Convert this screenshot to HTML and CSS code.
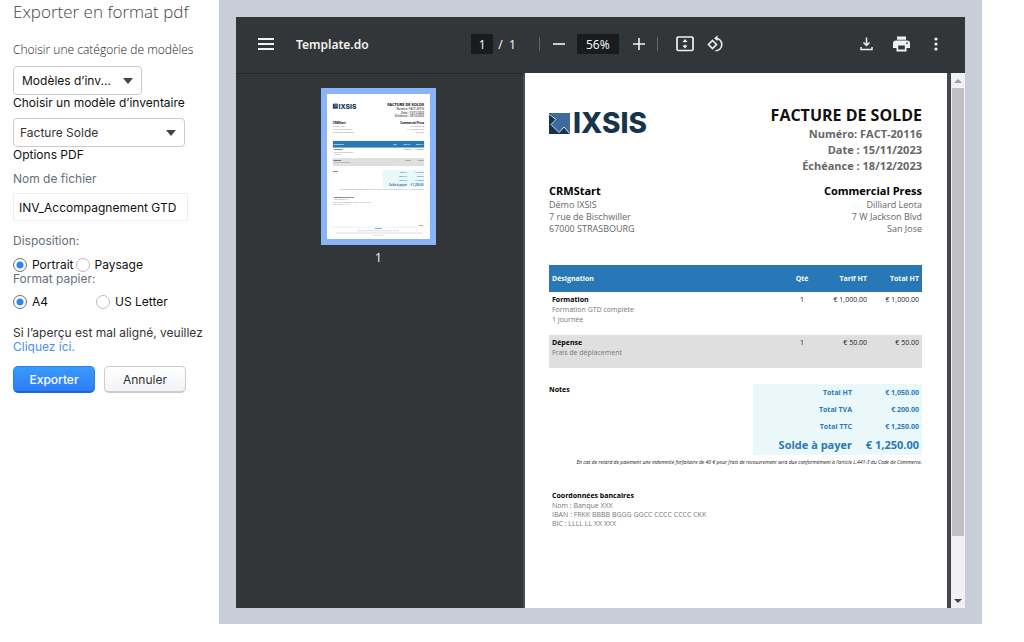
FILE: index.html
```html
<!DOCTYPE html>
<html lang="fr">
<head>
<meta charset="utf-8">
<title>Exporter en format pdf</title>
<link rel="stylesheet" href="styles.css">
</head>
<body>
<div class="layout">
  <form class="options">
    <h1 class="title">Exporter en format pdf</h1>
    <label class="label label-light" for="category">Choisir une catégorie de modèles</label>
    <div class="select select-short">
      <select id="category"><option>Modèles d’inv...</option></select>
    </div>
    <label class="label" for="template">Choisir un modèle d’inventaire</label>
    <div class="select select-long">
      <select id="template"><option>Facture Solde</option></select>
    </div>
    <h2 class="label section">Options PDF</h2>
    <label class="label label-muted" for="filename">Nom de fichier</label>
    <input class="filename" id="filename" type="text" value="INV_Accompagnement GTD">
    <fieldset class="group">
      <legend class="label label-muted">Disposition:</legend>
      <div class="radios radios-tight">
        <label class="radio"><input type="radio" name="layout" checked>Portrait</label>
        <label class="radio"><input type="radio" name="layout">Paysage</label>
      </div>
    </fieldset>
    <fieldset class="group group-next">
      <legend class="label label-muted">Format papier:</legend>
      <div class="radios radios-wide">
        <label class="radio"><input type="radio" name="paper" checked>A4</label>
        <label class="radio"><input type="radio" name="paper">US Letter</label>
      </div>
    </fieldset>
    <p class="hint">Si l’aperçu est mal aligné, veuillez <a href="#">Cliquez ici.</a></p>
    <div class="actions">
      <button class="btn btn-primary" type="button">Exporter</button>
      <button class="btn" type="button">Annuler</button>
    </div>
  </form>

  <main class="frame">
    <div class="viewer">
      <header class="toolbar">
        <div class="bar-start">
          <button class="icon" type="button" aria-label="Menu"><svg width="16" height="14" viewBox="0 0 16 14"><path d="M0 2h16M0 7h16M0 12h16" stroke="#f1f1f1" stroke-width="2"/></svg></button>
          <span class="doc-name">Template.do</span>
        </div>
        <div class="bar-middle">
          <input class="box page-box" type="text" value="1" aria-label="Page">
          <span class="page-total">/&nbsp; 1</span>
          <span class="divider"></span>
          <button class="icon" type="button" aria-label="Zoom arrière"><svg width="12" height="12" viewBox="0 0 12 12"><path d="M0 6h12" stroke="#f1f1f1" stroke-width="1.6"/></svg></button>
          <input class="box zoom-box" type="text" value="56%" aria-label="Zoom">
          <button class="icon" type="button" aria-label="Zoom avant"><svg width="12" height="12" viewBox="0 0 12 12"><path d="M0 6h12M6 0v12" stroke="#f1f1f1" stroke-width="1.6"/></svg></button>
          <span class="divider divider-second"></span>
          <button class="icon" type="button" aria-label="Ajuster à la page"><svg width="18" height="16" viewBox="0 0 18 16"><rect x="1" y="1" width="16" height="13.5" rx="1.2" fill="none" stroke="#f1f1f1" stroke-width="1.7"/><path d="M9 3l2.6 3H6.400zM9 12.500l2.600-3H6.400z" fill="#f1f1f1"/><path d="M9 5v5.500" stroke="#f1f1f1" stroke-dasharray="1.500 2"/></svg></button>
          <button class="icon rotate" type="button" aria-label="Pivoter"><svg width="18" height="18" viewBox="0 0 18 18" fill="none" stroke="#f1f1f1" stroke-width="1.600"><path d="M5.500 5.500L9.500 9.500L5.500 13.500L1.500 9.500z"/><path d="M8.500 3.200A6.300 6.300 0 1 1 8.500 15.800"/><path d="M10.500 .3L7.200 3.300L10.500 6.300z" fill="#f1f1f1" stroke="none"/></svg></button>
        </div>
        <div class="bar-end">
          <button class="icon" type="button" aria-label="Télécharger"><svg width="13" height="14" viewBox="0 0 13 14" fill="none" stroke="#f1f1f1" stroke-width="1.500"><path d="M6.500 .5v7.500M3.500 5.500l3 3 3-3M1 10v2.500h11V10"/></svg></button>
          <button class="icon" type="button" aria-label="Imprimer"><svg width="17" height="16" viewBox="0 0 17 16"><path d="M4 .5h9v3.200H4zM3 4.500h11a3 3 0 0 1 3 3V12h-3.500v3.500h-10V12H0V7.500a3 3 0 0 1 3-3z" fill="#f1f1f1"/><path d="M5.200 9.500h6.600v4H5.200z" fill="#323639"/><circle cx="14" cy="7.200" r=".9" fill="#323639"/></svg></button>
          <button class="icon more" type="button" aria-label="Plus"><svg width="4" height="14" viewBox="0 0 4 14" fill="#f1f1f1"><circle cx="2" cy="2" r="1.600"/><circle cx="2" cy="7" r="1.600"/><circle cx="2" cy="12" r="1.600"/></svg></button>
        </div>
      </header>

      <div class="content">
        <aside class="thumbs">
          <div class="thumb">
            <svg viewBox="0 0 421 594" role="img" aria-label="Aperçu de la page 1" font-family="Open Sans, sans-serif">
              <rect width="421" height="594" fill="#fff"/>
              <rect x="24" y="40" width="20" height="20" fill="#1d3f5e"/><path d="M27 40h17v17l-5-5-4 4-8-8 4-4z" fill="#466f9d"/>
              <text x="47" y="60" font-family="Inter, sans-serif" font-weight="800" font-size="28" fill="#16344c">IXSIS</text>
              <g text-anchor="end" font-weight="700"><text x="397" y="48" font-size="16">FACTURE DE SOLDE</text>
              <g font-size="11" fill="#666"><text x="397" y="65">Numéro: FACT-20116</text><text x="397" y="81">Date : 15/11/2023</text><text x="397" y="96">Échéance : 18/12/2023</text></g>
              <text x="397" y="122" font-size="11">Commercial Press</text></g>
              <text x="24" y="122" font-size="11" font-weight="700">CRMStart</text>
              <g font-size="9" fill="#777"><text x="24" y="135">Démo IXSIS</text><text x="24" y="147">7 rue de Bischwiller</text><text x="24" y="160">67000 STRASBOURG</text>
              <g text-anchor="end"><text x="397" y="135">Dilliard Leota</text><text x="397" y="147">7 W Jackson Blvd</text><text x="397" y="160">San Jose</text></g></g>
              <rect x="24" y="192" width="373" height="27" fill="#2878b8"/><rect x="24" y="262" width="373" height="33" fill="#dfdfdf"/>
              <g font-size="7" font-weight="700"><g fill="#fff"><text x="27" y="208">Désignation</text><text x="271" y="208">Qté</text><text x="312" y="208">Tarif HT</text><text x="363" y="208">Total HT</text></g>
              <text x="27" y="230">Formation</text><text x="27" y="273">Dépense</text><text x="24" y="320">Notes</text><text x="27" y="425">Coordonnées bancaires</text></g>
              <g font-size="7" fill="#777"><text x="27" y="240">Formation GTD complète</text><text x="27" y="250">1 journée</text><text x="27" y="283">Frais de déplacement</text><text x="27" y="435">Nom : Banque XXX</text><text x="27" y="444">IBAN : FRKK BBBB BGGG GGCC CCCC CCCC CKK</text><text x="27" y="454">BIC : LLLL LL XX XXX</text></g>
              <g font-size="7" fill="#333" text-anchor="end"><text x="279" y="230">1</text><text x="342" y="230">€ 1,000.00</text><text x="394" y="230">€ 1,000.00</text><text x="279" y="273">1</text><text x="342" y="273">€ 50.00</text><text x="394" y="273">€ 50.00</text></g>
              <rect x="228" y="311" width="169" height="71" fill="#ebf8f9"/>
              <g font-size="7" font-weight="700" fill="#2878b8" text-anchor="end"><text x="327" y="322">Total HT</text><text x="394" y="322">€ 1,050.00</text><text x="327" y="339">Total TVA</text><text x="394" y="339">€ 200.00</text><text x="327" y="356">Total TTC</text><text x="394" y="356">€ 1,250.00</text><g font-size="11"><text x="327" y="375">Solde à payer</text><text x="394" y="375">€ 1,250.00</text></g></g>
              <text x="397" y="391" font-size="5" font-style="italic" fill="#777" text-anchor="end">En cas de retard de paiement une indemnité forfaitaire de 40 € pour frais de recouvrement sera due conformément à l’article L.441-3 du Code de Commerce.</text>
              <text x="397" y="540" font-size="7" text-anchor="end">Page 1</text>
              <path d="M24 544h373" stroke="#ddd" stroke-width="2"/><path d="M196 550h28" stroke="#6fb1d8" stroke-width="4"/><path d="M125 559h170M35 568h355M187 577h47" stroke="#ccc" stroke-width="3" stroke-dasharray="14 2"/>
            </svg>
          </div>
          <span class="thumb-number">1</span>
        </aside>

        <article class="page">
          <div class="heading">
            <div class="logo">
              <svg width="21" height="21" viewBox="0 0 21 21"><rect width="21" height="21" fill="#16344c"/><path d="M1 0h20v20.500l-6-6.500-5 5L2.500 11.500 7.500 7z" fill="#3f6a9c"/><path d="M0 1l7 5.500-5 5 8 8 5-5.500 5.500 6.500" fill="none" stroke="#dcecf6"/></svg>
              <span>IXSIS</span>
            </div>
            <div class="invoice-info">
              <h2>FACTURE DE SOLDE</h2>
              <p>Numéro: FACT-20116</p><p>Date : 15/11/2023</p><p>Échéance : 18/12/2023</p>
            </div>
          </div>
          <div class="parties">
            <address><strong>CRMStart</strong>Démo IXSIS<br>7 rue de Bischwiller<br>67000 STRASBOURG</address>
            <address class="client"><strong>Commercial Press</strong>Dilliard Leota<br>7 W Jackson Blvd<br>San Jose</address>
          </div>
          <table class="lines">
            <thead><tr><th class="col-name">Désignation</th><th class="col-qty">Qté</th><th class="col-price">Tarif HT</th><th class="col-total">Total HT</th></tr></thead>
            <tbody>
              <tr><td class="col-name"><strong>Formation</strong>Formation GTD complète<br>1 journée</td><td class="col-qty">1</td><td>€ 1,000.00</td><td>€ 1,000.00</td></tr>
              <tr class="shaded"><td class="col-name"><strong>Dépense</strong>Frais de déplacement</td><td class="col-qty">1</td><td>€ 50.00</td><td>€ 50.00</td></tr>
            </tbody>
          </table>
          <div class="summary">
            <strong class="notes">Notes</strong>
            <table class="totals">
              <tr><th>Total HT</th><td>€ 1,050.00</td></tr>
              <tr><th>Total TVA</th><td>€ 200.00</td></tr>
              <tr><th>Total TTC</th><td>€ 1,250.00</td></tr>
              <tr class="due"><th>Solde à payer</th><td>€ 1,250.00</td></tr>
            </table>
          </div>
          <p class="legal">En cas de retard de paiement une indemnité forfaitaire de 40 € pour frais de recouvrement sera due conformément à l’article L.441-3 du Code de Commerce.</p>
          <div class="bank"><strong>Coordonnées bancaires</strong>Nom : Banque XXX<br>IBAN : FRKK BBBB BGGG GGCC CCCC CCCC CKK<br>BIC : LLLL LL XX XXX</div>
        </article>

        <div class="scrollbar" aria-hidden="true">
          <span class="arrow arrow-up"></span>
          <span class="handle"></span>
          <span class="arrow arrow-down"></span>
        </div>
      </div>
    </div>
  </main>
</div>
</body>
</html>
```

FILE: styles.css
```css
* { box-sizing: border-box; }
body { margin: 0; background: #fff; font-family: Inter, "Liberation Sans", sans-serif; font-size: 12px; color: #111; }
h1, h2, p, fieldset, legend { margin: 0; padding: 0; border: 0; }
input, select, button { font: inherit; color: inherit; }

.layout { display: flex; align-items: flex-start; padding-right: 42px; }

/* Export options */
.options { flex: 0 0 219px; padding-left: 13px; display: flex; flex-direction: column; align-items: flex-start; }
.title { font: 300 17px/24px "Open Sans", sans-serif; color: #444; white-space: nowrap; }
.label { display: block; font-size: 12px; font-weight: 400; line-height: 16px; white-space: nowrap; }
.label-light { margin: 18px 0 8px; font-family: "Open Sans", sans-serif; font-weight: 300; color: #222; }
.label-muted { color: #666f7a; }
.select { position: relative; }
.select select { width: 100%; height: 29px; padding: 0 30px 0 8px; appearance: none; background: #fff; border: 1px solid #ccc; border-radius: 4px; }
.select::after { content: ""; position: absolute; right: 9px; top: 12px; border: 5px solid transparent; border-top: 6px solid #444; border-bottom: 0; pointer-events: none; }
.select-short { width: 129px; }
.select-long { width: 172px; margin-top: 7px; }
.select-long select { padding-left: 6px; color: #333; }
.section { margin-bottom: 8px; }
.filename { width: 175px; height: 28px; margin-top: 6px; padding: 0 5px; border: 1px solid #eee; background: #fff; }
.group { margin-top: 12px; min-width: 0; }
.group-next { margin-top: 0; }
.group-next .label { line-height: 14px; }
.radios { display: flex; margin-top: 9px; }
.radios-tight { gap: 2px; }
.radios-wide { display: grid; grid-template-columns: 83px auto; }
.radio { display: flex; align-items: center; gap: 5px; line-height: 14px; white-space: nowrap; }
.radio input { appearance: none; width: 14px; height: 14px; margin: 0; border: 1px solid #b9bdc9; border-radius: 50%; background: #fff; }
.radio input:checked { border-color: #6b7080; background: radial-gradient(circle, #2c85f7 0 3px, #fff 4px); }
.hint { margin-top: 17px; line-height: 14px; color: #333; }
.hint a { display: block; color: #4a90e8; text-decoration: none; }
.actions { display: flex; gap: 9px; margin-top: 12px; }
.btn { width: 82px; height: 27px; padding: 0; border: 1px solid #ccc; border-bottom: 2px solid #c8cbd0; border-radius: 5px; background: linear-gradient(#fff, #f1f3f5); color: #333; }
.btn-primary { border-color: #2a7cf0; border-bottom-color: #1f66dc; background: linear-gradient(#3a9afa, #2c7df8); color: #fff; font-weight: 500; }

/* Viewer */
.frame { flex: 1; min-width: 0; height: calc(100vh - 18px); min-height: 560px; padding: 17px 17px 16px; background: #c9cdd7; }
.viewer { display: flex; flex-direction: column; height: 100%; background: #323639; }
.toolbar { display: flex; align-items: center; flex: 0 0 56px; padding: 0 27px 2px 22px; font: 12px "Noto Sans", sans-serif; color: #f1f1f1; }
.bar-start, .bar-middle, .bar-end { display: flex; align-items: center; }
.bar-start { flex: 1; gap: 22px; }
.bar-end { flex: 1; justify-content: flex-end; gap: 20px; }
.icon { display: flex; padding: 0; border: 0; background: none; }
.more { margin-left: 4px; }
.doc-name { font-weight: 600; }
.box { height: 20px; padding: 0; border: 0; background: #191b1c; text-align: center; }
.page-box { width: 22px; }
.page-total { margin-left: 5px; }
.divider { width: 1px; height: 14px; margin: 0 13px 0 23px; background: #606468; }
.zoom-box { width: 42px; margin: 0 14px 0 12px; }
.divider-second { margin: 0 18px 0 12px; }
.rotate { margin-left: 13px; }
.content { display: flex; flex: 1; min-height: 0; }
.thumbs { flex: 0 0 289px; display: flex; flex-direction: column; align-items: center; padding: 14px 2px 0 0; border-top: 1px solid #25282a; border-right: 2px solid #4a4e52; }
.thumb { width: 115px; padding: 6px; background: #8ab4f8; }
.thumb svg { display: block; width: 100%; }
.thumb-number { margin-top: 5px; font: 12px/16px "Noto Sans", sans-serif; color: #f1f1f1; }

/* Invoice */
.page { flex: 1; min-width: 0; overflow: hidden; padding: 32px 25px 0 24px; background: #fff; font: 9px/12px "Open Sans", sans-serif; color: #666; }
.page strong { display: block; color: #000; }
.heading { display: flex; justify-content: space-between; }
.logo { display: flex; align-items: center; align-self: flex-start; gap: 3px; margin-top: 7px; color: #16344c; font: 800 28px/22px Inter, sans-serif; }
.invoice-info { text-align: right; font-size: 11px; font-weight: 700; line-height: 16px; }
.invoice-info h2 { font-size: 16px; line-height: 21px; color: #111; }
.parties { display: flex; justify-content: space-between; margin-top: 9px; }
.parties address { font-style: normal; }
.parties strong { font-size: 11px; line-height: 16px; }
.client { text-align: right; }
.lines { width: 100%; margin-top: 30px; border-collapse: collapse; font-size: 7px; line-height: 10px; color: #222; }
.lines th { height: 27px; padding: 0 3px; background: #2878b8; color: #fff; text-align: right; }
.lines td { height: 33px; padding: 3px 3px 0; vertical-align: top; text-align: right; }
.lines tbody tr:first-child td { height: 43px; }
.lines .col-name { text-align: left; color: #777; }
.lines th.col-name { color: #fff; }
.lines .col-qty { width: 32px; text-align: center; }
.col-price { width: 52px; }
.col-total { width: 52px; }
.shaded { background: #dfdfdf; }
.summary { display: flex; justify-content: space-between; margin-top: 16px; }
.notes { font-size: 7px; }
.totals { width: 169px; border-collapse: collapse; background: #ebf8f9; color: #2878b8; font-size: 7px; font-weight: 700; text-align: right; }
.totals th, .totals td { height: 17px; padding: 0 3px; }
.totals td { width: 67px; }
.totals .due td, .totals .due th { height: 20px; font-size: 11px; white-space: nowrap; }
.legal { margin-top: 2px; font-size: 5px; line-height: 10px; font-style: italic; color: #111; text-align: right; white-space: nowrap; }
.bank { margin: 23px 0 0 3px; font-size: 7px; line-height: 9px; color: #777; }
.bank strong { line-height: 11px; }

.scrollbar { flex: 0 0 18px; display: flex; flex-direction: column; align-items: stretch; border-left: 4px solid #43474c; background: #f1f1f1; }
.arrow { height: 15px; display: flex; align-items: center; justify-content: center; }
.arrow::after { content: ""; border: 4px solid transparent; }
.arrow-up::after { border-bottom-color: #a0a0a0; border-top: 0; }
.arrow-down::after { border-top-color: #444; border-bottom: 0; }
.handle { flex: 1; margin: 0 1px 57px; background: #c1c1c1; }
```
